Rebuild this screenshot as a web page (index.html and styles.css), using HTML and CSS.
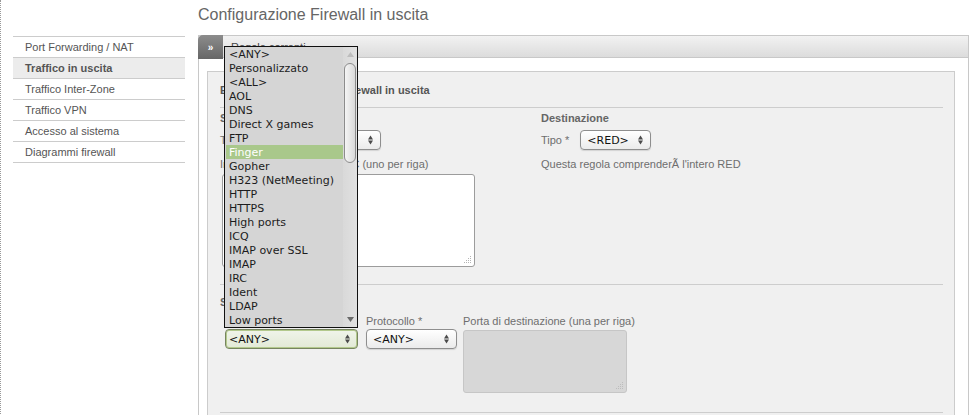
FILE: index.html
```html
<!DOCTYPE html>
<html lang="it">
<head>
<meta charset="utf-8">
<title>Configurazione Firewall in uscita</title>
<link rel="stylesheet" href="styles.css">
</head>
<body>
<div class="page">
  <h1 class="page-title">Configurazione Firewall in uscita</h1>

  <nav class="sidebar">
    <ul class="nav">
      <li class="nav-item">Port Forwarding / NAT</li>
      <li class="nav-item is-active">Traffico in uscita</li>
      <li class="nav-item">Traffico Inter-Zone</li>
      <li class="nav-item">Traffico VPN</li>
      <li class="nav-item">Accesso al sistema</li>
      <li class="nav-item">Diagrammi firewall</li>
    </ul>
  </nav>

  <section class="panel">
    <header class="panel-head">
      <span class="panel-toggle">»</span>
      <span class="panel-title">Regole correnti</span>
    </header>
    <div class="panel-body">
      <div class="box">
        <h2 class="box-title">Editore delle regole del firewall in uscita</h2>
        <hr class="sep">
        <div class="cols">
          <div class="col">
            <h3 class="col-title">Sorgente</h3>
            <div class="type-row">
              <span class="lbl">Tipo *</span>
              <div class="select select-src">
                <span>&lt;ANY&gt;</span>
                <svg class="arrows" width="7" height="12" viewBox="0 0 7 12"><path d="M3.5 1.5 L6 5.5 H1Z M3.5 10.5 L1 6.5 H6Z" fill="#4a4a4a"/></svg>
              </div>
            </div>
            <p class="lbl note">Inserisci indirizzi IP/reti/MAC (uno per riga)</p>
            <div class="textarea">
              <svg width="8" height="8" viewBox="0 0 8 8"><g fill="#b4b4b4"><rect x="6" y="0" width="1" height="1"/><rect x="4" y="2" width="1" height="1"/><rect x="6" y="2" width="1" height="1"/><rect x="2" y="4" width="1" height="1"/><rect x="4" y="4" width="1" height="1"/><rect x="6" y="4" width="1" height="1"/><rect x="0" y="6" width="1" height="1"/><rect x="2" y="6" width="1" height="1"/><rect x="4" y="6" width="1" height="1"/><rect x="6" y="6" width="1" height="1"/></g></svg>
            </div>
          </div>
          <div class="col">
            <h3 class="col-title">Destinazione</h3>
            <div class="type-row">
              <span class="lbl">Tipo *</span>
              <div class="select select-dst">
                <span>&lt;RED&gt;</span>
                <svg class="arrows" width="7" height="12" viewBox="0 0 7 12"><path d="M3.5 1.5 L6 5.5 H1Z M3.5 10.5 L1 6.5 H6Z" fill="#4a4a4a"/></svg>
              </div>
            </div>
            <p class="lbl note">Questa regola comprenderÃ&nbsp;l'intero RED</p>
          </div>
        </div>
        <hr class="sep sep-2">
        <h3 class="col-title svc-title">Servizio</h3>
        <div class="svc-row">
          <div class="field field-svc">
            <span class="lbl">Servizio *</span>
            <div class="select-wrap">
              <div class="select is-focus">
                <span>&lt;ANY&gt;</span>
                <svg class="arrows" width="7" height="12" viewBox="0 0 7 12"><path d="M3.5 1.5 L6 5.5 H1Z M3.5 10.5 L1 6.5 H6Z" fill="#4a4a4a"/></svg>
              </div>
              <div class="dropdown">
                <ul class="dd-list">
                  <li class="dd-item">&lt;ANY&gt;</li>
                  <li class="dd-item">Personalizzato</li>
                  <li class="dd-item">&lt;ALL&gt;</li>
                  <li class="dd-item">AOL</li>
                  <li class="dd-item">DNS</li>
                  <li class="dd-item">Direct X games</li>
                  <li class="dd-item">FTP</li>
                  <li class="dd-item is-hl">Finger</li>
                  <li class="dd-item">Gopher</li>
                  <li class="dd-item">H323 (NetMeeting)</li>
                  <li class="dd-item">HTTP</li>
                  <li class="dd-item">HTTPS</li>
                  <li class="dd-item">High ports</li>
                  <li class="dd-item">ICQ</li>
                  <li class="dd-item">IMAP over SSL</li>
                  <li class="dd-item">IMAP</li>
                  <li class="dd-item">IRC</li>
                  <li class="dd-item">Ident</li>
                  <li class="dd-item">LDAP</li>
                  <li class="dd-item">Low ports</li>
                </ul>
                <div class="dd-scroll">
                  <span class="dd-btn"><svg width="7" height="5" viewBox="0 0 7 5"><path d="M3.5 0 L7 5 H0Z" fill="#bdbdbd"/></svg></span>
                  <span class="dd-thumb"></span>
                  <span class="dd-btn dd-btn-down"><svg width="7" height="5" viewBox="0 0 7 5"><path d="M0 0 H7 L3.5 5Z" fill="#6a6a6a"/></svg></span>
                </div>
              </div>
            </div>
          </div>
          <div class="field field-proto">
            <span class="lbl">Protocollo *</span>
            <div class="select">
              <span>&lt;ANY&gt;</span>
              <svg class="arrows" width="7" height="12" viewBox="0 0 7 12"><path d="M3.5 1.5 L6 5.5 H1Z M3.5 10.5 L1 6.5 H6Z" fill="#4a4a4a"/></svg>
            </div>
          </div>
          <div class="field field-port">
            <span class="lbl">Porta di destinazione (una per riga)</span>
            <div class="textarea is-disabled">
              <svg width="8" height="8" viewBox="0 0 8 8"><g fill="#bdbdbd"><rect x="6" y="0" width="1" height="1"/><rect x="4" y="2" width="1" height="1"/><rect x="6" y="2" width="1" height="1"/><rect x="2" y="4" width="1" height="1"/><rect x="4" y="4" width="1" height="1"/><rect x="6" y="4" width="1" height="1"/><rect x="0" y="6" width="1" height="1"/><rect x="2" y="6" width="1" height="1"/><rect x="4" y="6" width="1" height="1"/><rect x="6" y="6" width="1" height="1"/></g></svg>
            </div>
          </div>
        </div>
        <hr class="sep sep-3">
      </div>
    </div>
  </section>
</div>
</body>
</html>
```

FILE: styles.css
```css
* { box-sizing: border-box; }

html, body {
  margin: 0;
  padding: 0;
  background: #fff;
}

body {
  font-family: "Liberation Sans", Arial, sans-serif;
  font-size: 11px;
  color: #555;
  height: 415px;
  overflow: hidden;
}

.page {
  display: grid;
  grid-template-columns: 172px 771px;
  grid-template-rows: 35px auto;
  column-gap: 13px;
  padding-left: 12px;
  border-left: 1px dotted #999;
  min-height: 415px;
}

.page-title {
  grid-column: 2;
  grid-row: 1;
  margin: 0;
  padding-top: 6px;
  font-size: 16px;
  line-height: 18px;
  font-weight: normal;
  color: #666;
}

/* Sidebar */
.sidebar {
  grid-column: 1;
  grid-row: 2;
  padding-top: 1px;
}

.nav {
  list-style: none;
  margin: 0;
  padding: 0;
  border-top: 1px solid #ccc;
}

.nav-item {
  height: 21px;
  line-height: 20px;
  padding-left: 12px;
  border-bottom: 1px solid #ccc;
  color: #555;
}

.nav-item.is-active {
  background: #ececec;
  font-weight: bold;
}

/* Panel */
.panel {
  grid-column: 2;
  grid-row: 2;
  border: 1px solid #c8c8c8;
  border-bottom: 0;
  background: #fff;
}

.panel-head {
  display: flex;
  align-items: center;
  height: 22px;
  background: linear-gradient(#f2f2f2, #dcdcdc);
  border-bottom: 1px solid #c8c8c8;
}

.panel-toggle {
  align-self: flex-start;
  display: flex;
  align-items: center;
  justify-content: center;
  width: 25px;
  height: 24px;
  margin: -1px 0 -3px -1px;
  background: linear-gradient(#8c8c8c, #666);
  border-radius: 5px 0 0 0;
  color: #fff;
  font-size: 10px;
  font-weight: bold;
}

.panel-title {
  margin-left: 8px;
  color: #444;
}

.panel-body {
  padding: 13px 13px 0 8px;
}

.box {
  border: 1px solid #ccc;
  background: #f0f0f0;
  padding: 12px 11px 20px 12px;
}

.box-title {
  margin: 0 0 10px;
  font-size: 11px;
  line-height: 13px;
  font-weight: bold;
  color: #555;
}

.sep {
  border: 0;
  height: 1px;
  margin: 0;
  background: #cdcdcd;
}

.sep-2 { margin-top: 17px; }
.sep-3 { margin-top: 19px; }

.cols {
  display: grid;
  grid-template-columns: 321px 1fr;
  padding-top: 4px;
}

.col-title {
  margin: 0;
  font-size: 11px;
  line-height: 13px;
  font-weight: bold;
  color: #666;
}

.lbl {
  color: #6e6e6e;
  line-height: 13px;
  white-space: nowrap;
}

.type-row {
  display: flex;
  align-items: center;
  gap: 11px;
  margin-top: 5px;
}

.note {
  margin: 8px 0 0;
}

/* Controls */
.select {
  display: flex;
  align-items: center;
  justify-content: space-between;
  height: 20px;
  padding: 0 6px;
  border: 1px solid #8e8e8e;
  border-radius: 4px;
  background: linear-gradient(#fff, #ebebeb);
  box-shadow: 0 1px 1px rgba(0, 0, 0, 0.12);
  font-family: "DejaVu Sans", sans-serif;
  font-size: 11px;
  color: #111;
}

.select-src { width: 122px; }
.select-dst { width: 71px; }

.select.is-focus {
  border-color: #76845f;
  box-shadow: inset 0 0 0 1px #b3c98d;
  background: linear-gradient(#f0f4ea, #e2e9d6);
  padding-left: 3px;
}

.arrows { flex: none; }

.textarea {
  display: flex;
  align-items: flex-end;
  justify-content: flex-end;
  width: 253px;
  height: 93px;
  margin: 3px 0 0 2px;
  padding: 2px;
  background: #fff;
  border: 1px solid #9c9c9c;
  border-radius: 3px;
}

.svc-title {
  margin-top: 11px;
}

.svc-row {
  display: flex;
  align-items: flex-start;
  margin-top: 6px;
}

.field {
  display: flex;
  flex-direction: column;
}

.field > .select,
.select-wrap {
  margin-top: 1px;
}

.field-svc { width: 133px; margin-left: 5px; }
.field-proto { width: 91px; margin-left: 8px; }
.field-port { width: 164px; margin-left: 6px; }

.field-port .textarea.is-disabled {
  width: 164px;
  height: 63px;
  margin: 2px 0 0;
  background: #d7d7d7;
  border-color: #c6c6c6;
}

/* Open dropdown list */
.select-wrap {
  position: relative;
}

.dropdown {
  position: absolute;
  left: -1px;
  bottom: calc(100% + 1px);
  z-index: 10;
  display: flex;
  width: 134px;
  height: 282px;
  border: 1px solid #111;
  background: #d5d5d5;
  font-family: "DejaVu Sans", sans-serif;
  font-size: 11px;
  color: #1c1c1c;
}

.dd-list {
  list-style: none;
  margin: 0;
  padding: 0 0 0 1px;
  width: 118px;
}

.dd-item {
  height: 14px;
  line-height: 15px;
  padding-left: 3px;
  white-space: nowrap;
  overflow: hidden;
}

.dd-item.is-hl {
  background: #a9c88b;
  color: #fff;
}

.dd-scroll {
  display: flex;
  flex-direction: column;
  align-items: center;
  width: 14px;
  background: linear-gradient(to right, #d9d9d9, #e1e1e1);
}

.dd-btn {
  display: flex;
  align-items: center;
  justify-content: center;
  height: 15px;
  width: 14px;
}

.dd-btn-down {
  margin-top: auto;
}

.dd-thumb {
  width: 12px;
  height: 100px;
  margin-top: 1px;
  border: 1px solid #8c8c8c;
  border-radius: 6px;
  background: linear-gradient(to right, #f5f5f5, #d9d9d9);
}
```
